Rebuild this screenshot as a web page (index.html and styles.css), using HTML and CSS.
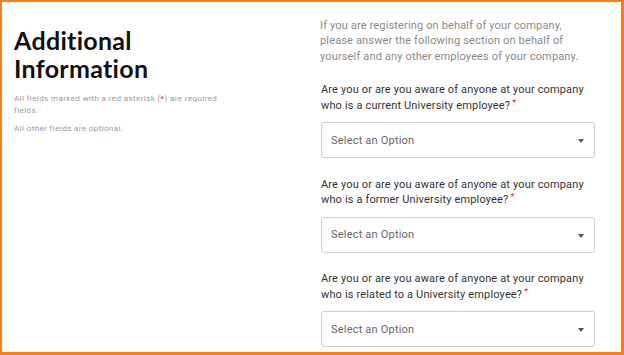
FILE: index.html
```html
<!DOCTYPE html>
<html lang="en">
<head>
  <meta charset="UTF-8" />
  <meta name="viewport" content="width=device-width,initial-scale=1" />
  <title>Additional Information</title>
  <link rel="stylesheet" href="styles.css">
</head>
<body>
  <div class="frame">
    <div class="intro-col">
      <h1 class="title">Additional Information</h1>
      <p class="note">All fields marked with a red asterisk (<span class="req">*</span>) are required fields.</p>
      <p class="note">All other fields are optional.</p>
    </div>

    <div class="form-col">
      <p class="lead">If you are registering on behalf of your company, please answer the following section on behalf of yourself and any other employees of your company.</p>

      <div class="field">
        <label class="label">Are you or are you aware of anyone at your company who is a current University employee?<span class="req">*</span></label>
        <div class="select">
          <span>Select an Option</span>
          <span class="caret"></span>
        </div>
      </div>

      <div class="field">
        <label class="label">Are you or are you aware of anyone at your company who is a former University employee?<span class="req">*</span></label>
        <div class="select">
          <span>Select an Option</span>
          <span class="caret"></span>
        </div>
      </div>

      <div class="field">
        <label class="label">Are you or are you aware of anyone at your company who is related to a University employee?<span class="req">*</span></label>
        <div class="select">
          <span>Select an Option</span>
          <span class="caret"></span>
        </div>
      </div>
    </div>
  </div>
</body>
</html>
```

FILE: styles.css
```css
:root {
  --orange: #fd7e14;
  --text: #333;
  --muted: #8a8a8a;
  --border: #cfcfcf;
  --red: #d9262c;
}
* { box-sizing: border-box; margin:0; padding:0 }
html, body { height:100%; background:#fff }
body { font-family:Roboto, "Liberation Sans", sans-serif; color:var(--text) }

.frame {
  display:flex;
  width:624px; height:355px; overflow:hidden;
  border:solid var(--orange);
  border-width:2px 3px 3px 2px;
}

.intro-col {
  width:300px;
  padding:24px 12px 0;
}
.title {
  font-family:Lato, "Open Sans", sans-serif;
  font-size:25px; line-height:28px; font-weight:700;
  color:#111; letter-spacing:0.3px;
  margin-bottom:11px; width:170px;
}
.note {
  font-size:8px; line-height:12px; color:#999;
  width:210px; margin-bottom:6px; letter-spacing:0.4px;
}
.req { color:var(--red) }

.form-col {
  width:275px;
  margin-left:18px;
  padding-top:15.5px;
}
.lead {
  font-size:11px; line-height:15.5px; color:var(--muted);
  letter-spacing:0.15px;
  margin-bottom:18px;
}
.field { margin-bottom:18.5px }
.label {
  display:block;
  font-size:11px; line-height:15.5px; color:var(--text);
  letter-spacing:0.15px;
  margin-bottom:8px; padding-left:1px;
}
.label .req { font-size:9px; margin-left:2px; position:relative; top:-3px }
.select {
  display:flex; align-items:center; justify-content:space-between;
  height:36px; margin-left:1px;
  padding:0 10px 0 9px;
  border:1px solid var(--border); border-radius:3px;
  font-size:11px; color:#666; letter-spacing:0.2px;
}
.caret {
  width:0; height:0;
  border-left:3.5px solid transparent;
  border-right:3.5px solid transparent;
  border-top:4px solid #555;
  margin-top:2px;
}
```
